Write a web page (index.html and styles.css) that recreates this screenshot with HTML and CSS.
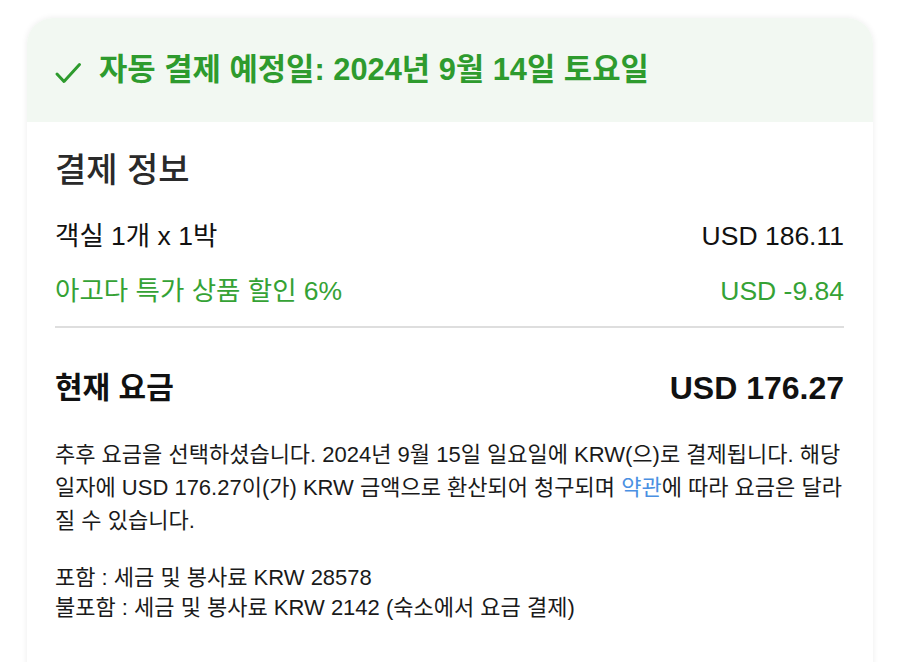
FILE: index.html
```html
<!DOCTYPE html>
<html lang="ko">
<head>
<meta charset="utf-8">
<link rel="stylesheet" href="styles.css">
</head>
<body>
<div class="card">
  <div class="banner">
    <svg class="check" width="28" height="24" viewBox="0 0 28 24"><path d="M3 13 L10 20.5 L25.5 3.5" fill="none" stroke="#2e9b2e" stroke-width="3" stroke-linecap="round" stroke-linejoin="round"/></svg>
    <span class="banner-text">자동 결제 예정일: 2024년 9월 14일 토요일</span>
  </div>
  <div class="body">
    <h2 class="title">결제 정보</h2>
    <div class="row"><span>객실 1개 x 1박</span><span>USD 186.11</span></div>
    <div class="row green"><span>아고다 특가 상품 할인 6%</span><span>USD -9.84</span></div>
    <hr class="divider">
    <div class="row total"><span class="total-label">현재 요금</span><span class="total-value">USD 176.27</span></div>
    <p class="note">추후 요금을 선택하셨습니다. 2024년 9월 15일 일요일에 KRW(으)로 결제됩니다. 해당 일자에 USD 176.27이(가) KRW 금액으로 환산되어 청구되며 <span class="link">약관</span>에 따라 요금은 달라질 수 있습니다.</p>
    <p class="tax">포함 : 세금 및 봉사료 KRW 28578<br>불포함 : 세금 및 봉사료 KRW 2142 (숙소에서 요금 결제)</p>
  </div>
</div>
</body>
</html>
```
FILE: styles.css
```css
html, body { margin: 0; padding: 0; background: #ffffff; }
body {
  font-family: "Liberation Sans", "Noto Sans CJK KR", sans-serif;
  color: #111;
  padding: 18px 27px 0 27px;
  height: 662px;
  box-sizing: border-box;
  overflow: hidden;
}
.card {
  background: #fff;
  border-radius: 26px 26px 0 0;
  box-shadow: 0 0 6px rgba(0,0,0,0.08);
  overflow: hidden;
  height: 700px;
}
.banner {
  background: #f2f8f2;
  height: 104px;
  display: flex;
  align-items: center;
  padding-left: 27px;
  gap: 17px;
}
.check { flex: none; margin-top: 6px; }
.banner-text {
  color: #2e9b2e;
  font-size: 30.8px;
  font-weight: bold;
  line-height: 40px;
}
.body { padding: 26px 29px 0 28px; }
.title {
  margin: 0 0 27px;
  font-size: 34px;
  font-weight: 500;
  color: #2a2a2a;
  line-height: 44px;
}
.row {
  display: flex;
  justify-content: space-between;
  font-size: 26.5px;
  line-height: 34px;
  margin-bottom: 21px;
  color: #111;
}
.row.green { color: #35a235; margin-bottom: 18px; }
.divider {
  border: none;
  border-top: 2px solid #dedede;
  margin: 0;
}
.total { margin-top: 40px; margin-bottom: 30px; align-items: center; line-height: 40px; }
.total-label { font-size: 30px; font-weight: bold; }
.total-value { font-size: 32px; font-weight: bold; }
.note {
  margin: 0 0 26px;
  font-size: 22px;
  line-height: 33px;
  color: #1a1a1a;
}
.link { color: #4a90e2; }
.tax {
  margin: 0;
  font-size: 22px;
  line-height: 30px;
  color: #1a1a1a;
}
```
